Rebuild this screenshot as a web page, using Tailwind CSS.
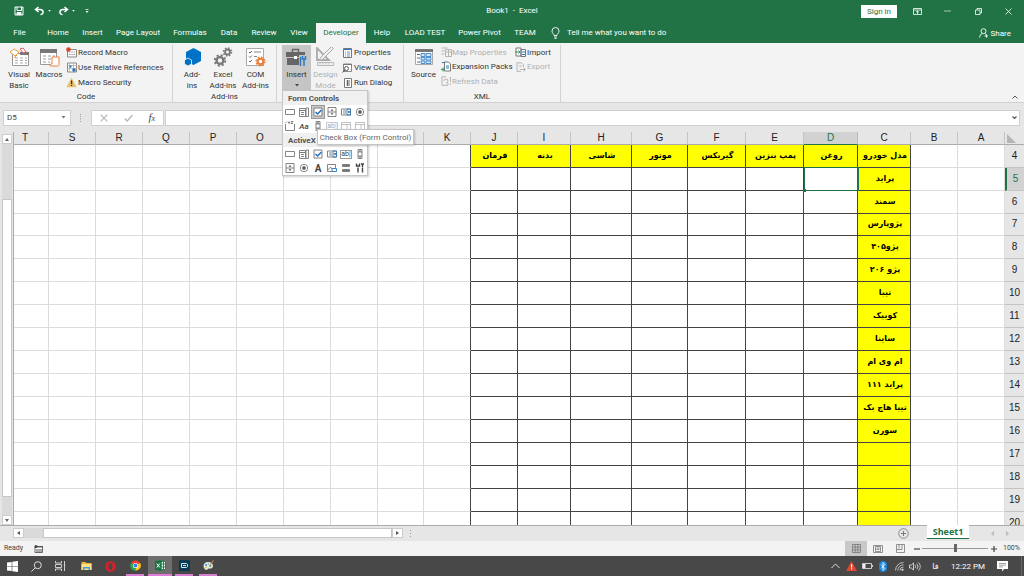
<!DOCTYPE html>
<html lang="en">
<head>
<meta charset="utf-8">
<title>Book1 - Excel</title>
<script src="https://cdn.jsdelivr.net/npm/@tailwindcss/browser@4"></script>
</head>
<body class="h-screen flex flex-col overflow-hidden bg-[#e6e6e6] font-[Roboto,'Noto_Sans',sans-serif] text-[8px] leading-[11px] text-[#333] whitespace-nowrap">

<!-- Title bar -->
<header class="h-[22px] shrink-0 bg-[#217346] text-white flex items-center relative">
  <div class="flex items-center pl-[14px]">
    <button aria-label="Save" class="w-[10px]"><svg class="w-[10px] h-[10px]" viewBox="0 0 10 10" fill="none" stroke="#fff"><path d="M1 1h8v8H1z M3 1v3.500h4.500V1"/><path d="M3 9V6.500h4V9" fill="#fff"/></svg></button>
    <button aria-label="Undo" class="ml-[10px] flex items-center gap-[3px]"><svg class="w-[11px] h-[10px]" viewBox="0 0 11 10" fill="none" stroke="#fff" stroke-width="1.5"><path d="M4.500 1 1.500 3.500l3 2.500M1.500 3.500H6c4 0 4 5 .5 5"/></svg><svg class="w-[3px] h-[2px]" viewBox="0 0 4 3" fill="#fff"><path d="M0 0h4L2 2.500z"/></svg></button>
    <button aria-label="Redo" class="ml-[7px] flex items-center gap-[3px]"><svg class="w-[11px] h-[10px]" viewBox="0 0 11 10" fill="none" stroke="#fff" stroke-width="1.5"><path d="m6.500 1 3 2.500-3 2.500M9.500 3.500H5c-4 0-4 5-.5 5"/></svg><svg class="w-[3px] h-[2px]" viewBox="0 0 4 3" fill="#fff"><path d="M0 0h4L2 2.500z"/></svg></button>
    <button aria-label="Customize Quick Access Toolbar" class="ml-[10px]"><svg class="w-[4px] h-[5px]" viewBox="0 0 4 5" fill="#fff"><path d="M.5 0h3v.8h-3zM.5 2h3L2 4z"/></svg></button>
  </div>
  <h1 class="absolute inset-x-0 top-[5px] text-center pointer-events-none">Book1 &nbsp;-&nbsp; Excel</h1>
  <div class="ml-auto flex items-center">
    <button class="w-[36px] h-[13px] bg-white text-[#217346]">Sign in</button>
    <button aria-label="Ribbon Display Options" class="ml-[5px] w-[30px] flex justify-center"><svg class="w-[9px] h-[7px]" viewBox="0 0 9 7" fill="none" stroke="#fff" stroke-width=".8"><path d="M.5.5h8v6h-8zM.5 2h8M4.500 6V3M3 4.300 4.500 3 6 4.300"/></svg></button>
    <button aria-label="Minimize" class="w-[31px] flex justify-center"><svg class="w-[7px] h-[7px]" viewBox="0 0 7 7" stroke="#fff" stroke-width=".6"><path d="M0 3h7"/></svg></button>
    <button aria-label="Restore" class="w-[30px] flex justify-center"><svg class="w-[7px] h-[7px]" viewBox="0 0 7 7" fill="none" stroke="#fff" stroke-width=".8"><path d="M.5 2h4.500v4.500H.5zM2 2V.5h4.500V5H5"/></svg></button>
    <button aria-label="Close" class="w-[31px] flex justify-center"><svg class="w-[7px] h-[7px]" viewBox="0 0 7 7" stroke="#fff" stroke-width=".8"><path d="m.5.5 6 6M6.500.5l-6 6"/></svg></button>
  </div>
</header>

<!-- Ribbon tabs -->
<nav class="h-[21px] shrink-0 bg-[#217346] text-white flex">
  <button class="w-[39px]">File</button>
  <button class="w-[38px]">Home</button>
  <button class="w-[31px]">Insert</button>
  <button class="w-[60px]">Page Layout</button>
  <button class="w-[44px]">Formulas</button>
  <button class="w-[34px]">Data</button>
  <button class="w-[36px]">Review</button>
  <button class="w-[34px]">View</button>
  <button class="w-[50px] mt-px pb-px bg-[#f3f3f3] text-[#217346]">Developer</button>
  <button class="w-[32px]">Help</button>
  <button class="w-[54px]">LOAD TEST</button>
  <button class="w-[55px]">Power Pivot</button>
  <button class="w-[36px]">TEAM</button>
  <button class="ml-2 flex items-center gap-[7px]"><svg class="w-[9px] h-[12px]" viewBox="0 0 9 12" fill="none" stroke="#fff" stroke-width=".9"><path d="M3 8.500C3 7 1 6.200 1 4a3.500 3.500 0 0 1 7 0c0 2.200-2 3-2 4.500zM3 10h3M3.500 11.400h2"/></svg>Tell me what you want to do</button>
  <button class="ml-auto mr-[13px] flex items-center gap-[2px] pt-px"><svg class="w-[10px] h-[10px]" viewBox="0 0 10 10" fill="none" stroke="#fff" stroke-width=".9"><circle cx="4.500" cy="3.200" r="2.500"/><path d="M.7 9.500c0-2 1-3.500 2.600-4M6 5.700c.5.200.8.500 1 .8M5.500 8H9M7.500 6.300v3.400"/></svg>Share</button>
</nav>

<!-- Ribbon -->
<section aria-label="Developer ribbon" class="h-[60px] shrink-0 bg-[#f3f3f3] border-b border-[#d2d2d2] flex relative">
  <div class="w-[173px] flex flex-col border-r border-[#d2d2d2] mt-[2px]">
    <div class="flex flex-1">
      <button class="w-[30px] ml-1 flex flex-col items-center"><svg class="w-[21px] h-[20px] mt-[2px] mb-[2px] shrink-0" viewBox="0 0 21 20" fill="none"><path d="M3.500 6.500h16v12h-16z" fill="#fff" stroke="#999"/><path d="M11 5h9v3h-9z" fill="#777"/><path d="M6 11h3m2 0h3m2 0h2M6 13.500h3m2 0h3m2 0h2M6 16h3m2 0h3m2 0h2" stroke="#aaa"/><path d="m1 5 4-3 5 3-4 4z" fill="#fff" stroke="#e8a33d"/><path d="m11 2 3-1 3 4-3 1z" fill="#fff" stroke="#d9586a"/><path d="M8 8 5 11" stroke="#e8a33d"/></svg><span>Visual<br>Basic</span></button>
      <button class="w-[30px] flex flex-col items-center"><svg class="w-[21px] h-[20px] mt-[2px] mb-[2px] shrink-0" viewBox="0 0 21 20" fill="none"><path d="M1.500 2.500h16v15h-16z" fill="#fff" stroke="#999"/><path d="M1 2h17v4H1z" fill="#777"/><path d="M4 9h3m2 0h3m2 0h2M4 12h3m2 0h3M4 15h3m2 0h2" stroke="#999"/><path d="M13 10h7v7.500c0 1.500-1 1.500-1.500 1.500H12c-1.500 0-1.500-2 0-2h1z" fill="#fff" stroke="#e8813a"/></svg>Macros</button>
      <div class="flex flex-col">
        <button class="h-[15px] flex items-center gap-px ml-[2px]"><svg class="w-[11px] h-[11px]" viewBox="0 0 11 11" fill="none"><path d="M1.500 2.500h9v7.500h-9z" fill="#fff" stroke="#888"/><path d="M3 5h7M3 7.500h7" stroke="#999" stroke-dasharray="1.500 .8"/><circle cx="2.500" cy="2.500" r="2.300" fill="#d24726"/></svg>Record Macro</button>
        <button class="h-[15px] flex items-center gap-px ml-[2px]"><svg class="w-[11px] h-[11px]" viewBox="0 0 11 11" fill="none"><path d="M1.500 1h9v9h-9z" fill="#fff" stroke="#888"/><path d="M3.500 1v9M1 3.500h10M1 6.500h10M7.500 1v9" stroke="#aaa" stroke-width=".7"/><path d="M3.500 3.500h2v2h-2zM6.500 6.500h3v3h-3z" fill="#2b6cb8"/></svg>Use Relative References</button>
        <button class="h-[15px] flex items-center gap-px ml-[2px]"><svg class="w-[11px] h-[11px]" viewBox="0 0 11 11"><path d="m5.500.8 5.200 9.400H.3z" fill="#eac06a"/><path d="M4.900 3.500h1.300v3.500H4.900zM4.900 7.800h1.300V9H4.900z" fill="#333"/></svg>Macro Security</button>
      </div>
    </div>
    <div class="text-center h-[10px] leading-[10px]">Code</div>
  </div>
  <div class="w-[104px] flex flex-col border-r border-[#d2d2d2] mt-[2px]">
    <div class="flex flex-1 pl-[4px]">
      <button class="w-[30px] flex flex-col items-center"><svg class="w-[21px] h-[20px] mt-[2px] mb-[2px] shrink-0" viewBox="0 0 21 20" fill="#0072c6"><path d="M11.500 1 19 5v9l-7.500 4L4 14V5z"/><path d="m6 11 3.500 2v4L6 19l-3.500-2v-4z" stroke="#f3f3f3" stroke-width=".8"/></svg><span>Add-<br>ins</span></button>
      <button class="w-[32px] flex flex-col items-center"><svg class="w-[21px] h-[20px] mt-[2px] mb-[2px] shrink-0" viewBox="0 0 21 20" fill="none" stroke="#777"><circle cx="7" cy="13.500" r="3.400" stroke-width="2.400"/><circle cx="7" cy="13.500" r="5.300" stroke-width="1.800" stroke-dasharray="2.160 2"/><circle cx="14.500" cy="5" r="2.500" stroke-width="1.800"/><circle cx="14.500" cy="5" r="4" stroke-width="1.500" stroke-dasharray="1.600 1.540"/></svg><span>Excel<br>Add-ins</span></button>
      <button class="w-[33px] flex flex-col items-center"><svg class="w-[21px] h-[20px] mt-[2px] mb-[2px] shrink-0" viewBox="0 0 21 20" fill="none"><path d="M1.500 1.500h17v17h-17z" fill="#fff" stroke="#aaa"/><path d="m4 5 1 1 2-2M4 9.500l1 1 2-2M4 14l1 1 2-2" stroke="#666"/><path d="M9 5h7M9 9.500h3" stroke="#888"/><g stroke="#e8813a"><circle cx="15.500" cy="14.500" r="2.800" stroke-width="2" fill="#fff"/><circle cx="15.500" cy="14.500" r="4.400" stroke-width="1.400" stroke-dasharray="1.800 1.650"/></g></svg><span>COM<br>Add-ins</span></button>
    </div>
    <div class="text-center h-[10px] leading-[10px]">Add-ins</div>
  </div>
  <div class="w-[127px] flex border-r border-[#d2d2d2] mt-[2px] pl-[5px]">
    <div class="relative">
      <button aria-expanded="true" class="w-[29px] h-[46px] bg-[#c5c5c5] flex flex-col items-center"><svg class="w-[21px] h-[20px] mt-[2px] mb-[2px] shrink-0" viewBox="0 0 21 20" fill="none"><path d="M6.500 5V2.500h6V5" stroke="#666" stroke-width="1.400"/><path d="M0 5h19v5H0zM1 11h17v7H1z" fill="#666"/><path d="M8 9h3v3H8z" fill="#fff"/><path d="M13 8h7v12h-7z" fill="#c5c5c5"/><path d="M14.500 10v9M18 12v7M16.500 9v3h3V9" stroke="#2b78c2" stroke-width="1.500"/></svg>Insert<svg class="w-[4px] h-[3px] mt-1" viewBox="0 0 4 3" fill="#444"><path d="M0 0h4L2 2.500z"/></svg></button>
      <!-- Insert controls menu -->
      <div role="menu" class="absolute z-20 left-0 top-[45px] w-[86px] border border-[#c6c6c6] bg-white shadow-[1px_1px_2px_rgba(0,0,0,.2)]">
        <h2 class="h-[14px] leading-[15px] pl-[5px] bg-[#f0f0f0] font-bold text-[#555]">Form Controls</h2>
        <div id="form-controls" class="grid grid-cols-6"></div>
        <h2 class="h-[14px] leading-[15px] pl-[5px] bg-[#f0f0f0] font-bold text-[#555]">ActiveX</h2>
        <div id="activex-controls" class="grid grid-cols-6"></div>
        <div role="tooltip" class="absolute z-30 left-[34px] top-[38px] w-[97px] h-[16px] leading-[15px] border border-[#c4c4c4] bg-white text-center text-[#666] shadow-[1px_1px_2px_rgba(0,0,0,.2)]">Check Box (Form Control)</div>
      </div>
    </div>
    <button disabled class="w-[29px] flex flex-col items-center text-[#b1b1b1]"><svg class="w-[21px] h-[20px] mt-[2px] mb-[2px] shrink-0" viewBox="0 0 21 20" fill="none" stroke="#aaa"><path d="M2 1v12h12z" stroke-width="1.800"/><path d="m18.500 1.500-11 11-3 1 1-3 11-11z" fill="#eee"/><path d="M2.500 15.500h16v3h-16zM5 16v1.500m3-1.500v1.500m3-1.500v1.500m3-1.500v1.500" stroke-width=".8"/></svg><span>Design<br>Mode</span></button>
    <div class="flex flex-col">
      <button class="h-[15px] flex items-center gap-[2px] ml-[3px]"><svg class="w-[9px] h-[10px]" viewBox="0 0 9 10" fill="none"><path d="M.5.5h8v9h-8z" fill="#fff" stroke="#777"/><path d="M1 1.500h7" stroke="#2b78c2"/><path d="M2 4h1m1 0h3M2 6h1m1 0h3M2 8h1m1 0h3" stroke="#2b78c2" stroke-width=".8"/></svg>Properties</button>
      <button class="h-[15px] flex items-center gap-[2px] ml-[2px]"><svg class="w-[10px] h-[10px]" viewBox="0 0 10 10" fill="none"><path d="M1.500 1h8v7.500h-8z" fill="#fff" stroke="#888"/><path d="M1 1.500h9" stroke="#777"/><circle cx="4.500" cy="5.500" r="2" fill="#fff" stroke="#555"/><path d="m3 7-2.500 2.500" stroke="#555"/></svg>View Code</button>
      <button class="h-[15px] flex items-center gap-[2px] ml-1"><svg class="w-[8px] h-[10px]" viewBox="0 0 8 10" fill="none"><path d="M.5.5h7v9h-7z" fill="#fff" stroke="#777"/><path d="M2.500 3H6M2.500 5H6M2.500 7H6M3.500 2v6" stroke="#555" stroke-width=".9"/></svg>Run Dialog</button>
    </div>
  </div>
  <div class="w-[157px] flex flex-col border-r border-[#d2d2d2] mt-[2px]">
    <div class="flex flex-1 pl-1">
      <button class="w-[31px] flex flex-col items-center"><svg class="w-[20px] h-[20px] mt-[2px] mb-[2px] shrink-0" viewBox="0 0 20 20" fill="none"><path d="M1.500 2.500h17v15h-17z" fill="#fff" stroke="#aaa"/><path d="M1 2h18v3H1z" fill="#777"/><path d="M3 7.500h3M3 11h3M3 15h3" stroke="#666"/><path d="M7 6.500h4v3H7zM12 6.500h5v3h-5zM7 10.500h4v2.500H7zM12 10.500h5v2.500h-5zM7 14h4v2.500H7zM12 14h5v2.500h-5z" fill="#d5e5f5" stroke="#2b78c2" stroke-width=".8"/></svg>Source</button>
      <div class="flex flex-col w-[76px] pl-[2px]">
        <button disabled class="h-[14px] flex items-center text-[#b1b1b1]"><svg class="w-[11px] h-[10px]" viewBox="0 0 11 10" fill="none" stroke="#b5b5b5"><path d="M.5 1h6M.5 4h3M.5 7h3M4.500 2.500h6v7h-6zM4.500 5h6M7.500 3v6"/></svg>Map Properties</button>
        <button class="h-[15px] flex items-center"><svg class="w-[11px] h-[11px]" viewBox="0 0 11 11" fill="none"><path d="M3.500 1h4l2 2v7h-6z" fill="#fff" stroke="#777"/><path d="M5 5h3M5 7h3" stroke="#2b78c2"/><path d="M0 8.500h4M2 6.500v4" stroke="#2e9b5b"/><path d="M1 1.500h3" stroke="#2b78c2"/></svg>Expansion Packs</button>
        <button disabled class="h-[14px] flex items-center text-[#b1b1b1]"><svg class="w-[11px] h-[10px]" viewBox="0 0 11 10" fill="none" stroke="#b5b5b5"><path d="M5 .8H1v8.500h6V7M3 5a2 2 0 1 1 2 2M9.500 1v5M9.500 7.500V9"/></svg>Refresh Data</button>
      </div>
      <div class="flex flex-col">
        <button class="h-[14px] flex items-center gap-px"><svg class="w-[11px] h-[10px]" viewBox="0 0 11 10" fill="none"><path d="M1 1h5v8H1zM6 2.500h4.500v7H6z" fill="#fff" stroke="#777"/><path d="M0 5h5M3.500 3.500 5 5 3.500 6.500" stroke="#2e9b5b"/><path d="M7 5h3M7 7.500h3" stroke="#2b78c2"/></svg>Import</button>
        <button disabled class="h-[15px] flex items-center gap-px ml-px text-[#b1b1b1]"><svg class="w-[10px] h-[10px]" viewBox="0 0 10 10" fill="none" stroke="#b5b5b5"><path d="M1 .8h4.500l2 2V5M1 .8v8.500h4M4 7.500h5M7.500 5.500l2 2-2 2M3 4h3"/></svg>Export</button>
      </div>
    </div>
    <div class="text-center h-[10px] leading-[10px]">XML</div>
  </div>
  <button aria-label="Collapse the Ribbon" class="ml-auto self-end mr-[6px] mb-[3px]"><svg class="w-[6px] h-[4px]" viewBox="0 0 6 4" fill="none" stroke="#555"><path d="m.5 3.500 2.500-2.500 2.500 2.500"/></svg></button>
</section>

<!-- Formula bar -->
<section aria-label="Formula bar" class="h-[29px] shrink-0 flex items-center pl-[3px] pr-1">
  <div class="flex items-center h-[16px] w-[68px] bg-white border border-[#d0d0d0]">
    <input aria-label="Name Box" value="D5" class="w-full min-w-0 pl-[3px] outline-none text-[#444]">
    <svg class="w-[5px] h-[3px] mr-1 shrink-0" viewBox="0 0 5 3" fill="#777"><path d="M.5 0h4l-2 2.500z"/></svg>
  </div>
  <svg class="w-[2px] h-[8px] ml-[9px] mr-[9px]" viewBox="0 0 2 8" fill="#999"><path d="M0 0h1v1H0zM0 2.300h1v1H0zM0 4.600h1v1H0zM0 7h1v1H0z"/></svg>
  <div class="flex h-[16px] w-[73px] bg-white border border-[#d0d0d0] items-center justify-around">
    <button aria-label="Cancel"><svg class="w-[8px] h-[8px]" viewBox="0 0 8 8" stroke="#b5b5b5" stroke-width="1.200"><path d="m.7.7 6.600 6.600M7.300.7.7 7.300"/></svg></button>
    <button aria-label="Enter"><svg class="w-[9px] h-[8px]" viewBox="0 0 9 8" fill="none" stroke="#b5b5b5" stroke-width="1.300"><path d="m.7 4.500 2.500 2.500L8.500 1"/></svg></button>
    <button aria-label="Insert Function" class="font-['Liberation_Serif',serif] italic text-[11px] text-[#444]">f<span class="text-[8px]">x</span></button>
  </div>
  <div class="flex flex-1 ml-px items-center h-[16px] bg-white border border-[#d0d0d0]">
    <input aria-label="Formula" class="flex-1 min-w-0 px-1 outline-none">
    <button aria-label="Expand Formula Bar" class="mr-[2px]"><svg class="w-[5px] h-[4px]" viewBox="0 0 5 4" fill="none" stroke="#555" stroke-width="1.200"><path d="m.5.5 2 2 2-2"/></svg></button>
  </div>
</section>

<!-- Worksheet -->
<main class="flex flex-1 min-h-0">
  <div class="w-[13px] shrink-0 flex flex-col items-center pt-[2px]">
    <button aria-label="Scroll up" class="w-[10px] h-[10px] bg-white border border-[#ccc] flex items-center justify-center"><svg class="w-[4px] h-[3px]" viewBox="0 0 4 3" fill="#666"><path d="M0 3h4L2 0z"/></svg></button>
    <div class="flex-1 w-[10px] bg-[#dadada] flex flex-col">
      <div class="grow-[55]"></div>
      <div class="grow-[298] bg-white border border-[#c6c6c6]"></div>
      <div class="grow-[18]"></div>
    </div>
    <button aria-label="Scroll down" class="w-[10px] h-[10px] bg-white border border-[#ccc] flex items-center justify-center"><svg class="w-[4px] h-[3px]" viewBox="0 0 4 3" fill="#666"><path d="M0 0h4L2 3z"/></svg></button>
  </div>
  <div class="flex-1 min-w-0 overflow-hidden border-l border-[#ababab] bg-white">
    <table class="w-full table-fixed border-separate border-spacing-0 text-center">
      <colgroup id="cols"></colgroup>
      <thead><tr id="letters" class="bg-[#e6e6e6] font-['Liberation_Sans',Arial,sans-serif] text-[10px] leading-[12px] text-[#222]"></tr></thead>
      <tbody id="rows"></tbody>
    </table>
  </div>
</main>

<!-- Sheet tabs and horizontal scrolling -->
<footer class="shrink-0">
  <div class="h-[16px] flex items-start border-t border-[#ababab] pl-[13px]">
    <div class="flex items-center mt-[2px] h-[10px] w-[390px] bg-[#dadada]">
      <button aria-label="Scroll left" class="w-[11px] h-[10px] bg-white border border-[#ccc] flex items-center justify-center"><svg class="w-[3px] h-[4px]" viewBox="0 0 3 4" fill="#555"><path d="M3 0v4L0 2z"/></svg></button>
      <div class="ml-[19px] flex-1 h-[10px] bg-white border border-[#c6c6c6]"></div>
      <button aria-label="Scroll right" class="w-[11px] h-[10px] bg-white border border-[#ccc] flex items-center justify-center"><svg class="w-[3px] h-[4px]" viewBox="0 0 3 4" fill="#555"><path d="M0 0v4l3-2z"/></svg></button>
    </div>
    <svg class="w-[2px] h-[7px] ml-[7px] mt-1" viewBox="0 0 2 7" fill="#999"><path d="M0 0h1v1H0zM0 3h1v1H0zM0 6h1v1H0z"/></svg>
    <button aria-label="New sheet" class="ml-auto mt-[2px]"><svg class="w-[11px] h-[11px]" viewBox="0 0 11 11" fill="none" stroke="#777"><circle cx="5.500" cy="5.500" r="4.800" stroke-width=".8"/><path d="M5.500 3v5M3 5.500h5"/></svg></button>
    <button class="ml-[18px] -mt-px w-[42px] h-[14px] bg-white border-b border-[#217346] text-[#217346] font-['Open_Sans',sans-serif] font-bold text-[9px] leading-[11px]">Sheet1</button>
    <button aria-label="Previous sheet" class="ml-[22px] mt-[5px]"><svg class="w-[3px] h-[5px]" viewBox="0 0 3 5" fill="#bbb"><path d="M3 0v5L0 2.500z"/></svg></button>
    <button aria-label="Next sheet" class="ml-[12px] mr-[15px] mt-[5px]"><svg class="w-[3px] h-[5px]" viewBox="0 0 3 5" fill="#bbb"><path d="M0 0v5l3-2.500z"/></svg></button>
  </div>
  <!-- Status bar -->
  <div class="h-[15px] flex items-center bg-[#f3f3f3] px-1 text-[7px] text-[#444]">
    <span class="w-[30px]">Ready</span>
    <button aria-label="Record macro"><svg class="w-[9px] h-[8px]" viewBox="0 0 9 8" fill="none"><path d="M1 2h7.500v5.500H1z" fill="#fff" stroke="#666"/><path d="M1 1.500h8M3 4v3M5 4v3M7 4v3" stroke="#555"/><circle cx="2" cy="1.500" r="1.500" fill="#444"/></svg></button>
    <div class="ml-auto flex items-center">
      <button aria-label="Normal" class="w-[22px] h-[15px] bg-[#c8c8c8] flex items-center justify-center"><svg class="w-[9px] h-[9px]" viewBox="0 0 9 9" fill="none" stroke="#777" stroke-width=".8"><path d="M.5.5h8v8h-8zM3.200.5v8M5.900.5v8M.5 3.200h8M.5 5.900h8"/></svg></button>
      <button aria-label="Page Layout view" class="w-[22px] flex justify-center"><svg class="w-[10px] h-[8px]" viewBox="0 0 10 8" fill="none" stroke="#777" stroke-width=".8"><path d="M.5.500h9v7h-9zM2.500 1.500h5v5h-5zM3.500 3h3M3.500 4.500h3"/></svg></button>
      <button aria-label="Page Break Preview" class="w-[22px] flex justify-center"><svg class="w-[9px] h-[9px]" viewBox="0 0 9 9" fill="none" stroke="#777" stroke-width=".8"><path d="M.5.500h8v8h-8zM.5 5.500H6V.5M3 .5v4"/></svg></button>
      <button aria-label="Zoom out" class="ml-[3px] w-[8px]"><svg class="w-[6px] h-[6px]" viewBox="0 0 6 6" stroke="#444" stroke-width="1.200"><path d="M0 3h6"/></svg></button>
      <input type="range" aria-label="Zoom" min="10" max="190" value="100" class="w-[66px] h-[9px] appearance-none bg-transparent [&::-webkit-slider-runnable-track]:h-px [&::-webkit-slider-runnable-track]:bg-[#999] [&::-webkit-slider-thumb]:appearance-none [&::-webkit-slider-thumb]:w-[3px] [&::-webkit-slider-thumb]:h-[8px] [&::-webkit-slider-thumb]:-mt-1 [&::-webkit-slider-thumb]:bg-[#666]">
      <button aria-label="Zoom in" class="ml-[3px] w-[6px]"><svg class="w-[6px] h-[6px]" viewBox="0 0 6 6" stroke="#444" stroke-width="1.200"><path d="M0 3h6M3 0v6"/></svg></button>
      <span class="ml-[6px] w-[17px]">100%</span>
    </div>
  </div>
</footer>

<!-- Windows taskbar -->
<nav aria-label="Taskbar" class="h-[20px] shrink-0 bg-[#484848] flex text-white">
  <button aria-label="Start" class="w-6 flex items-center justify-center"><svg class="w-[11px] h-[11px]" viewBox="0 0 11 11" fill="#fff"><path d="M0 1.600 4.700.9v4.300H0zM5.300.8 11 0v5.200H5.300zM0 5.800h4.700v4.300L0 9.400zM5.300 5.800H11V11l-5.700-.8z"/></svg></button>
  <button aria-label="Search" class="w-6 flex items-center justify-center"><svg class="w-[11px] h-[11px]" viewBox="0 0 11 11" fill="none" stroke="#ddd"><circle cx="6.800" cy="4.200" r="3.500"/><path d="m4.300 6.700-4 4"/></svg></button>
  <button aria-label="Task View" class="w-6 flex items-center justify-center"><svg class="w-[11px] h-[10px]" viewBox="0 0 11 10" fill="none" stroke="#ddd" stroke-width=".9"><path d="M.5 0v2h6V0M.5 10V8h6v2M.5 3.500h6v3h-6zM9.500 0v10M8.700 4h1.600"/></svg></button>
  <button aria-label="File Explorer" class="w-6 ml-[2px] flex items-center justify-center"><svg class="w-[11px] h-[10px]" viewBox="0 0 11 10"><path d="M.5 1h4l1 1h5v7H.5z" fill="#e9b83a"/><path d="M.5 3h10v6H.5z" fill="#ffe08a"/><path d="M2 6h7v3H7.500V7.500h-4V9H2z" fill="#3f9fd8"/></svg></button>
  <button aria-label="Opera" class="w-6 flex items-center justify-center"><svg class="w-[11px] h-[11px]" viewBox="0 0 11 11"><circle cx="5.500" cy="5.500" r="5.200" fill="#d8202c"/><ellipse cx="5.500" cy="5.500" rx="2" ry="3.500" fill="#484848"/></svg></button>
  <button aria-label="Chrome" class="w-6 ml-px flex flex-col items-center pt-[4px]"><svg class="w-[11px] h-[11px] mb-[3px] shrink-0" viewBox="0 0 11 11"><path d="M5.500 5.500.8 3a5.300 5.300 0 0 1 9.400 0z" fill="#e5402f"/><path d="M5.500 5.500 10.200 3a5.300 5.300 0 0 1-4.900 7.800z" fill="#fbc81c"/><path d="M5.500 5.500.8 3a5.300 5.300 0 0 0 4.500 7.800z" fill="#2ea44f"/><circle cx="5.500" cy="5.500" r="2.600" fill="#fff"/><circle cx="5.500" cy="5.500" r="2" fill="#3b7ded"/></svg><span class="w-[18px] h-[2px] shrink-0 bg-[#d87fd3]"></span></button>
  <button aria-label="Excel" class="w-6 ml-px bg-[#6e6e6e] flex flex-col items-center pt-[4px]"><svg class="w-[11px] h-[11px] mb-[3px] shrink-0" viewBox="0 0 11 11" fill="none"><path d="M6 1.500h4.500v8H6z" fill="#fff" stroke="#21834d"/><path d="M6.500 4h4M6.500 7h4M8.500 2v7" stroke="#21834d"/><path d="M0 1 6.500 0v11L0 10z" fill="#1b7341"/><path d="m1.800 3.500 3 4M4.800 3.500l-3 4" stroke="#fff"/></svg><span class="w-6 h-[2px] shrink-0 bg-[#e07ddb]"></span></button>
  <button aria-label="Recorder" class="w-6 flex flex-col items-center pt-[4px]"><svg class="w-[11px] h-[11px] mb-[3px] shrink-0" viewBox="0 0 11 11" fill="none"><path d="M0 0h11v11H0z" fill="#0b3c54"/><path d="M2.500 3.500h5l1 1v2l-1 1h-5z" stroke="#cfe8f2"/><path d="M4 5.500h3" stroke="#cfe8f2"/></svg><span class="w-[18px] h-[2px] shrink-0 bg-[#d87fd3]"></span></button>
  <button aria-label="Paint" class="w-6 flex flex-col items-center pt-[4px]"><svg class="w-[11px] h-[11px] mb-[3px] shrink-0" viewBox="0 0 11 11"><path d="M5 2c3 0 5 1.500 5 3.700S8 9 6.500 8.500 4.500 10 3.500 10 .5 8.500.5 6 2.500 2 5 2z" fill="#dfe6ea"/><circle cx="3" cy="5" r="1" fill="#3b8edb"/><circle cx="5.500" cy="4" r=".8" fill="#6db4c8"/><circle cx="7.500" cy="6" r=".9" fill="#49a94d"/><circle cx="3" cy="7.500" r=".9" fill="#e9b83a"/><path d="m6 6 4-6 .8.5L7 6.500z" fill="#c98a4a"/></svg><span class="w-[18px] h-[2px] shrink-0 bg-[#d87fd3]"></span></button>
  <div class="ml-auto flex items-center">
    <button aria-label="Show hidden icons" class="w-[16px] flex justify-center"><svg class="w-[9px] h-[6px]" viewBox="0 0 9 6" fill="none" stroke="#ddd"><path d="m.5 5 4-4 4 4"/></svg></button>
    <button aria-label="Alert" class="w-[16px] flex justify-center"><svg class="w-[11px] h-[10px]" viewBox="0 0 11 10"><path d="M5.500 0 11 10H0z" fill="#e0452f"/><path d="M5 3h1.200v3.500H5zM5 7.300h1.200v1.200H5z" fill="#fff"/></svg></button>
    <button aria-label="Battery" class="w-[16px] flex justify-center"><svg class="w-[11px] h-[6px]" viewBox="0 0 11 6" fill="none" stroke="#eee" stroke-width=".8"><path d="M.5.5h9v5h-9zM10.500 2v2"/><path d="M1 1h2.500v4H1z" fill="#eee" stroke="none"/></svg></button>
    <button aria-label="Bluetooth" class="w-[16px] flex justify-center"><svg class="w-[8px] h-[11px]" viewBox="0 0 8 11" fill="none"><rect width="8" height="11" rx="4" fill="#1583dc"/><path d="m2 3.500 4 4-2 2v-8l2 2-4 4" stroke="#fff" stroke-width=".9"/></svg></button>
    <button aria-label="Wi-Fi" class="w-[16px] flex justify-center"><svg class="w-[9px] h-[9px]" viewBox="0 0 9 9" fill="none" stroke="#ccc" stroke-width=".9"><path d="M.5 8.500a8 8 0 0 1 8-8M2.800 8.500a5.700 5.700 0 0 1 5.700-5.700M5 8.500A3.500 3.500 0 0 1 8.500 5"/><circle cx="7.500" cy="7.800" r=".8" fill="#ccc"/></svg></button>
    <button aria-label="Volume" class="w-[16px] flex justify-center"><svg class="w-[12px] h-[9px]" viewBox="0 0 12 9" fill="none" stroke="#ddd" stroke-width=".9"><path d="M.5 3h1.800L4.500 1v7L2.300 6H.5zM6 3c.8.8.8 2.200 0 3M7.700 1.800c1.500 1.500 1.500 3.900 0 5.400M9.500.5c2.300 2.300 2.300 5.700 0 8"/></svg></button>
    <button lang="fa" class="w-[25px] font-['DejaVu_Sans',sans-serif]">فا</button>
    <time class="w-[40px] text-center">12:22 PM</time>
    <button aria-label="Notifications" class="ml-[3px] w-[22px] flex justify-center"><svg class="w-[11px] h-[11px]" viewBox="0 0 11 11"><path d="M0 0h11v8H7L5.500 10.500 5 8H0z" fill="#fff"/><path d="M2 2.500h7M2 4.200h7M2 5.900h4" stroke="#777" stroke-width=".7"/></svg></button>
    <span class="ml-[8px] mr-[2px] w-px h-[20px] bg-[#6a6a6a]"></span>
  </div>
</nav>

<script>
// Glyphs of the controls menu, drawn on a 10x10 grid.
const g = {
  button: '<path d="M.5 2.500h9v5h-9z"/>',
  combo: '<path d="M.5 1.500h6v2h-6zM.5 3.500h6v6h-6zM7 1h2.500v8.500H7zM2 5.500h3M2 7.500h3"/>',
  check: '<path d="M1 1h8v8H1z" fill="#fff"/><path d="m2.500 5 2 2 4-4" stroke="#1f6fc0" stroke-width="1.500"/>',
  spin: '<path d="M1 .5h8v9H1zM1 5h8"/><path d="M3.500 3.800h3L5 2zM3.500 6.200h3L5 8z" fill="#555" stroke="none"/>',
  list: '<path d="M.5 2h9v6h-9z"/><path d="M2 4h3M2 6h3" /><path d="M6 2h3.500v6H6z" stroke="#2b78c2"/><path d="M7 4.500h2L8 6z" fill="#2b78c2"/>',
  radio: '<circle cx="5" cy="5" r="3.700"/><circle cx="5" cy="5" r="1.500" fill="#555"/>',
  group: '<path d="M.5 3v6.500h9V3M.5 1.500h1M3 .5l1 2 1-2M6 .5h2l-2 2h2"/>',
  scroll: '<path d="M3 .5h4v9H3zM3 3h4M3 7h4"/><path d="M4 2h2M4 8h2" stroke="#444"/>',
  off: '<path d="M.5 1.500h9v7h-9zM.5 3.500h9M6 3.500v5"/>',
  image: '<path d="M.5 1.500h8v7h-8zM1 7l2.500-3L6 7"/><path d="M5 5.500h4.500v3H5z" fill="#fff" stroke="#2b78c2"/>',
  toggle: '<path d="M1.500 1.500h7v2h-7z" fill="#777"/><path d="M1.500 6.500h7v2h-7z" fill="#777"/>',
  tools: '<path d="M3 4.500v5M1.500 .5v2.500h3V.5M7.500 .5v4M7.500 5v4.500M6 1h3" stroke="#444" stroke-width="1.400"/>'
};
const icon = (k, c = '#777') => `<svg class="w-[10px] h-[10px]" viewBox="0 0 10 10" fill="none" stroke="${c}" stroke-width=".9">${g[k]}</svg>`;
const item = ([label, html, on]) => `<button role="menuitem" aria-label="${label}" class="${on ? 'h-[14px] flex items-center justify-center bg-[#c9c9c9] border border-[#999]' : 'h-[14px] flex items-center justify-center text-[#444]'}">${html}</button>`;
document.getElementById('form-controls').innerHTML = [
  ['Button', icon('button')], ['Combo Box', icon('combo')], ['Check Box', icon('check'), true], ['Spin Button', icon('spin')], ['List Box', icon('list')], ['Option Button', icon('radio')],
  ['Group Box', icon('group')], ['Label', '<i class="font-medium">Aa</i>'], ['Scroll Bar', icon('scroll')], ['Text Field', '<span class="text-[7px] leading-[7px] border border-[#ccc] text-[#aaa]">ab|</span>'], ['Combo List', icon('off', '#bbb')], ['Combo Drop-Down', icon('off', '#bbb')]
].map(item).join('');
document.getElementById('activex-controls').innerHTML = [
  ['Command Button', icon('button')], ['Combo Box', icon('combo')], ['Check Box', icon('check')], ['List Box', icon('list')], ['Text Box', '<span class="text-[7px] leading-[7px] border border-[#999]">ab|</span>'], ['Scroll Bar', icon('scroll')],
  ['Spin Button', icon('spin')], ['Option Button', icon('radio')], ['Label', '<b class="text-[10px]">A</b>'], ['Image', icon('image')], ['Toggle Button', icon('toggle')], ['More Controls', icon('tools')]
].map(item).join('');

// Columns from left to right; the sheet runs right to left, T takes the space that is left.
const cols = [['T', 0], ['S', 47], ['R', 47], ['Q', 47], ['P', 47], ['O', 47], ['N', 47], ['M', 47], ['L', 46], ['K', 47], ['J', 47], ['I', 53], ['H', 61], ['G', 56], ['F', 58], ['E', 58], ['D', 54], ['C', 53], ['B', 47], ['A', 47]];
document.getElementById('cols').innerHTML = cols.map(([, w]) => w ? `<col style="width:${w}px">` : '<col>').join('') + '<col style="width:19px">';
const letterClass = {
  D: 'h-[13px] p-0 font-normal bg-[#d2d2d2] text-[#217346] border-r border-b border-r-[#bbb] border-b-[#217346]',
  T: 'h-[13px] p-0 pr-[12px] font-normal border-r border-b border-r-[#c4c4c4] border-b-[#ababab]'
};
document.getElementById('letters').innerHTML = cols.map(([c]) =>
  `<th scope="col" class="${letterClass[c] || 'h-[13px] p-0 font-normal border-r border-b border-r-[#c4c4c4] border-b-[#ababab]'}">${c}</th>`).join('')
  + '<th class="p-0 border-b border-[#ababab]"><svg class="w-[9px] h-[9px] ml-[2px]" viewBox="0 0 9 9" fill="#b5b5b5"><path d="M0 0v9h9z"/></svg></th>';

const head = { J: 'فرمان', I: 'بدنه', H: 'شاسی', G: 'موتور', F: 'گیربکس', E: 'پمپ بنزین', D: 'روغن', C: 'مدل خودرو' };
const cars = ['پراید', 'سمند', 'پژوپارس', 'پژو۴۰۵', 'پژو ۲۰۶', 'تیبا', 'کوییک', 'ساینا', 'ام وی ام', 'پراید ۱۱۱', 'تیبا هاچ بک', 'سورن'];
let html = '';
for (let r = 4; r <= 20; r++) {
  html += `<tr class="${r === 7 ? 'h-[22px]' : 'h-[23px]'}">`;
  for (const [c] of cols) {
    const text = r === 4 ? head[c] || '' : c === 'C' ? cars[r - 5] || '' : '';
    let cls = 'p-0 border-r border-b border-[#dcdcdc]';
    if (c === 'K') cls = 'p-0 border-r border-b border-b-[#dcdcdc] border-r-[#444]';
    if (c in head) cls = 'p-0 border-r border-b border-[#444]';
    if (c === 'C' || (r === 4 && c in head)) cls = 'p-0 pb-[2px] border-r border-b border-[#444] bg-[#ffff00] text-black';
    if (c === 'D' && r === 5) cls = 'p-0 border-r border-b border-[#217346] relative';
    const handle = c === 'D' && r === 5 ? '<span class="absolute -inset-px border border-[#217346]"></span><span class="absolute -left-[2px] -bottom-[2px] w-[3px] h-[3px] bg-[#217346]"></span>' : '';
    html += `<td dir="rtl" lang="fa" class="${cls}"><span class="font-['DejaVu_Sans',sans-serif] text-[8px] font-bold">${text}</span>${handle}</td>`;
  }
  html += `<th scope="row" class="${r === 5 ? "p-0 pb-[2px] border-b border-l-2 border-b-[#c4c4c4] border-l-[#217346] bg-[#d2d2d2] text-[#217346] font-normal text-[10px] font-['Liberation_Sans',Arial,sans-serif]" : "p-0 pb-[2px] border-b border-[#c4c4c4] bg-[#e6e6e6] text-[#222] font-normal text-[10px] font-['Liberation_Sans',Arial,sans-serif]"}">${r}</th></tr>`;
}
document.getElementById('rows').innerHTML = html;
</script>
</body>
</html>
